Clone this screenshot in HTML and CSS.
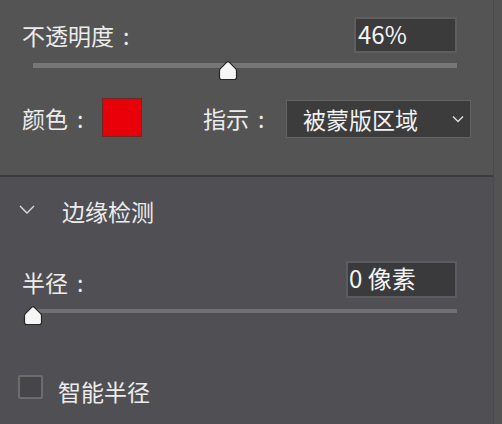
FILE: index.html
```html
<!DOCTYPE html>
<html lang="zh">
<head>
<meta charset="utf-8">
<link rel="stylesheet" href="styles.css">
</head>
<body>
<div class="panel">
  <section class="top">
    <div class="row row-opacity">
      <span class="label">不透明度<span class="colon">:</span></span>
      <div class="field field-opacity">46%</div>
    </div>
    <div class="slider">
      <div class="track"></div>
      <svg class="thumb" style="left: calc(46% - 10px)" width="20" height="21" viewBox="0 0 20 21">
        <path d="M8.6 2.4 Q10 1 11.4 2.4 L17.6 8.6 Q18.5 9.5 18.5 11 L18.5 17.5 Q18.5 19.5 16.5 19.5 L3.5 19.5 Q1.5 19.5 1.5 17.5 L1.5 11 Q1.5 9.5 2.4 8.6 Z" fill="#f6f6f6" stroke="#262626" stroke-width="1.2" stroke-linejoin="round"/>
      </svg>
    </div>
    <div class="row row-color">
      <span class="label label-color">颜色<span class="colon">:</span></span>
      <div class="swatch"></div>
      <span class="label label-show">指示<span class="colon">:</span></span>
      <div class="select">
        <span class="select-text">被蒙版区域</span>
        <svg class="select-chev" width="12" height="8" viewBox="0 0 12 8">
          <path d="M1 1.5 L6 6.5 L11 1.5" fill="none" stroke="#dcdcdc" stroke-width="1.5"/>
        </svg>
      </div>
    </div>
  </section>
  <section class="bottom">
    <div class="row row-head">
      <svg class="head-chev" width="16" height="9" viewBox="0 0 16 9">
        <path d="M1 1 L8 8 L15 1" fill="none" stroke="#dcdcdc" stroke-width="1.4"/>
      </svg>
      <span class="label head-text">边缘检测</span>
    </div>
    <div class="row row-radius">
      <span class="label">半径<span class="colon">:</span></span>
      <div class="field field-radius">0 像素</div>
    </div>
    <div class="slider slider-radius">
      <div class="track"></div>
      <svg class="thumb" style="left: -10px" width="20" height="21" viewBox="0 0 20 21">
        <path d="M8.6 2.4 Q10 1 11.4 2.4 L17.6 8.6 Q18.5 9.5 18.5 11 L18.5 17.5 Q18.5 19.5 16.5 19.5 L3.5 19.5 Q1.5 19.5 1.5 17.5 L1.5 11 Q1.5 9.5 2.4 8.6 Z" fill="#f6f6f6" stroke="#262626" stroke-width="1.2" stroke-linejoin="round"/>
      </svg>
    </div>
    <div class="row row-check">
      <div class="checkbox"></div>
      <span class="label check-text">智能半径</span>
    </div>
  </section>
</div>
</body>
</html>
```

FILE: styles.css
```css
html, body {
  margin: 0;
  padding: 0;
  background: #535353;
}
body {
  width: 502px;
  height: 424px;
  overflow: hidden;
  font-family: "Noto Sans CJK SC", "Noto Sans", sans-serif;
  color: #ececec;
}
.panel {
  width: 494px;
  height: 424px;
  border-right: 1px solid #4a4a4a;
  box-sizing: border-box;
}
.top {
  box-sizing: border-box;
  height: 175px;
  padding: 17px 36px 0 22px;
  background: #545454;
}
.row {
  display: flex;
  align-items: center;
}
.label {
  font-size: 23px;
  line-height: 28px;
  white-space: nowrap;
}
.colon {
  margin-left: 9px;
}
.row-opacity {
  height: 36px;
}
.field {
  margin-left: auto;
  box-sizing: border-box;
  background: #3b3b3b;
  border: 2px solid #5e5e5e;
  font-size: 24px;
  line-height: 30px;
  color: #f4f4f4;
  white-space: nowrap;
}
.field-opacity {
  width: 103px;
  height: 36px;
  padding-left: 2px;
}
.slider {
  position: relative;
  height: 21px;
  margin: 7px 0 0 11px;
}
.track {
  position: absolute;
  left: 0;
  right: 0;
  top: 3px;
  height: 5px;
  background: #767676;
}
.thumb {
  position: absolute;
  top: 0;
}
.row-color {
  margin-top: 17px;
  height: 40px;
  align-items: flex-start;
  margin-right: -14px;
}
.label-color {
  width: 80px;
  margin-top: 6px;
}
.swatch {
  box-sizing: border-box;
  width: 40px;
  height: 39px;
  background: #e80008;
  border: 1px solid #6a2a2a;
}
.label-show {
  width: 83px;
  margin-left: 61px;
  margin-top: 6px;
}
.select {
  box-sizing: border-box;
  width: 185px;
  height: 38px;
  margin-top: 2px;
  background: #3c3c3c;
  border: 1px solid #636363;
  display: flex;
  align-items: center;
  padding: 0 6px 0 16px;
}
.select-text {
  font-size: 23px;
  line-height: 28px;
  color: #f2f2f2;
}
.select-chev {
  margin-left: auto;
}
.bottom {
  box-sizing: border-box;
  height: 249px;
  border-top: 2px solid #3b3b3d;
  background: #504f53;
  padding: 0 36px 0 22px;
}
.row-head {
  margin-top: 22px;
  height: 24px;
}
.head-chev {
  margin-left: -3px;
  margin-top: -4px;
}
.head-text {
  margin-left: 27px;
}
.row-radius {
  margin-top: 38px;
  height: 37px;
}
.row-radius .label {
  margin-top: 4px;
}
.field-radius {
  width: 111px;
  height: 37px;
  padding-left: 1px;
  background: #3a3a3c;
  border-color: #5c5c5e;
}
.slider-radius {
  margin-top: 6px;
}
.slider-radius .track {
  top: 5px;
  height: 4px;
  background: #707072;
}
.slider-radius .thumb {
  top: 1px;
}
.row-check {
  margin-top: 50px;
  height: 28px;
  align-items: flex-start;
}
.checkbox {
  box-sizing: border-box;
  width: 25px;
  height: 24px;
  margin-left: -4px;
  background: #464648;
  border: 2px solid #6c6c6e;
  border-radius: 2px;
}
.check-text {
  margin-left: 15px;
  margin-top: 2px;
}
```
